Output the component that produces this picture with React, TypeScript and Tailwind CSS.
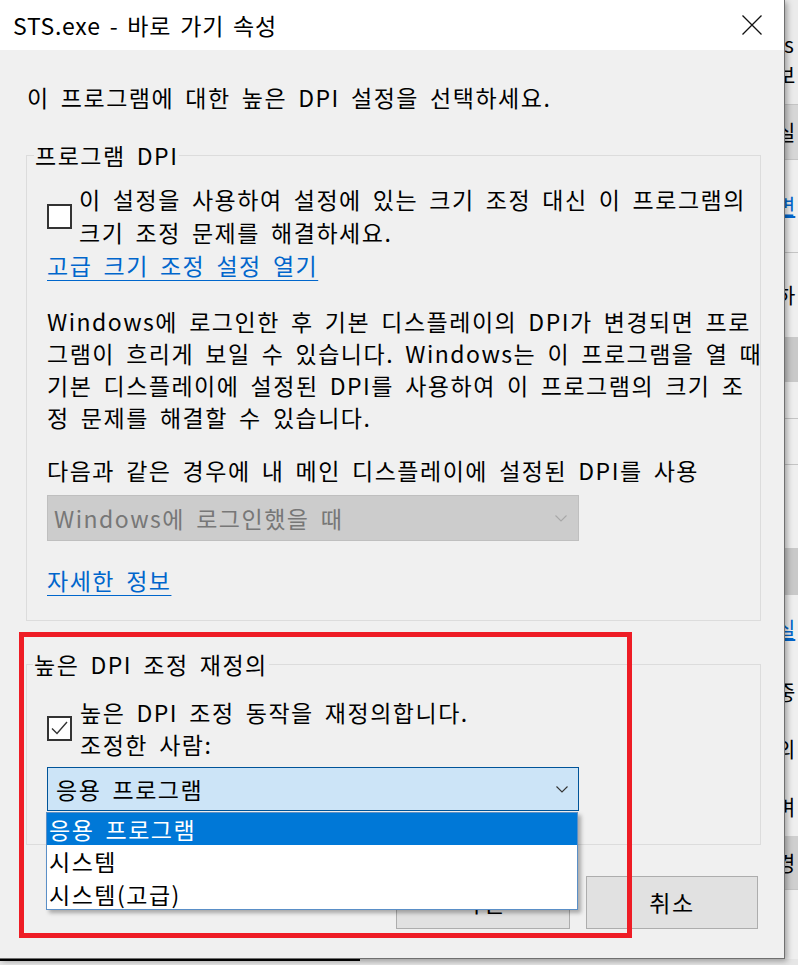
import React from "react";

const font = "font-['Noto_Sans_CJK_KR','Noto_Sans',sans-serif]";

// thin windows-style chevron used in the combo boxes
const Chevron: React.FC<{ color: string }> = ({ color }) => (
  <svg width="12" height="7" viewBox="0 0 12 7" fill="none">
    <path d="M0.5 0.5 L6 6 L11.5 0.5" stroke={color} strokeWidth="1.1" />
  </svg>
);

interface CheckProps {
  checked?: boolean;
}

const CheckBox: React.FC<CheckProps> = ({ checked }) => (
  <div className="w-[25px] h-[25px] shrink-0 border-2 border-[#333333] bg-white flex items-center justify-center">
    {checked && (
      <svg width="17" height="14" viewBox="0 0 17 14" fill="none">
        <path d="M1 7.5 L6 12.5 L16 1" stroke="#333333" strokeWidth="1.4" />
      </svg>
    )}
  </div>
);

// strip of the window lying behind the dialog
const strip = [
  { h: 30, bg: "bg-[#ebebeb]", text: "" },
  { h: 30, bg: "bg-[#ebebeb]", text: "rs" },
  { h: 30, bg: "bg-[#ebebeb]", text: "보" },
  { h: 15, bg: "bg-[#ebebeb]", text: "", border: true },
  { h: 55, bg: "bg-[#d6d6d6]", text: "실", border: true },
  { h: 93, bg: "bg-[#efefef]", text: "변", blue: true, border: true },
  { h: 84, bg: "bg-[#efefef]", text: "하" },
  { h: 45, bg: "bg-[#c9c9c9]", text: "" },
  { h: 37, bg: "bg-[#efefef]", text: "", border: true },
  { h: 46, bg: "bg-[#efefef]", text: "", border: true },
  { h: 83, bg: "bg-[#efefef]", text: "" },
  { h: 47, bg: "bg-[#c9c9c9]", text: "" },
  { h: 68, bg: "bg-[#efefef]", text: "실", blue: true },
  { h: 57, bg: "bg-[#efefef]", text: "중" },
  { h: 58, bg: "bg-[#efefef]", text: "의" },
  { h: 58, bg: "bg-[#efefef]", text: "며" },
  { h: 54, bg: "bg-[#cfcfcf]", text: "경", border: true },
  { h: 81, bg: "bg-[#efefef]", text: "" },
];

const App: React.FC = () => {
  return (
    <div className={`w-[798px] h-[965px] bg-[#e6e6e6] overflow-hidden relative ${font}`}>
      <div className="flex h-[959px]">
        {/* dialog */}
        <div className="relative w-[785px] h-[959px] shrink-0 flex flex-col border-r border-b border-[#707070] bg-[#f0f0f0] shadow-[2px_2px_6px_rgba(0,0,0,0.35)] z-10 text-black">
          {/* title bar */}
          <div className="h-[50px] bg-white flex items-center justify-between pl-[13px] pr-[22px] shrink-0">
            <span className="text-[23px] leading-[30px] tracking-[0.8px] [word-spacing:3px]">STS.exe - 바로 가기 속성</span>
            <svg width="20" height="20" viewBox="0 0 20 20" fill="none">
              <path d="M0.5 0.5 L19.5 19.5 M19.5 0.5 L0.5 19.5" stroke="#111" strokeWidth="1.3" />
            </svg>
          </div>

          <div className="flex-1 flex flex-col pl-[26px] text-[23px] tracking-[1.5px] [word-spacing:4.5px]">
            <div className="mt-[31px] leading-[32px] pl-[1px] whitespace-nowrap">이 프로그램에 대한 높은 DPI 설정을 선택하세요.</div>

            {/* program dpi group */}
            <fieldset className="mt-[26px] w-[735px] min-w-0 border border-[#dcdcdc] pb-[24px]">
              <legend className="ml-[7px] px-[1px] leading-[32px]">프로그램 DPI</legend>
              <div className="pl-[20px] flex flex-col">
                <div className="mt-[12px] flex items-center gap-[7px]">
                  <CheckBox />
                  <div className="leading-[33px] whitespace-nowrap">
                    이 설정을 사용하여 설정에 있는 크기 조정 대신 이 프로그램의
                    <br />
                    크기 조정 문제를 해결하세요.
                  </div>
                </div>
                <span className="leading-[32px] text-[#0066cc] underline underline-offset-[5px] decoration-[1px] self-start">고급 크기 조정 설정 열기</span>
                <div className="mt-[24px] leading-[32px] whitespace-nowrap">
                  Windows에 로그인한 후 기본 디스플레이의 DPI가 변경되면 프로
                  <br />
                  그램이 흐리게 보일 수 있습니다. Windows는 이 프로그램을 열 때
                  <br />
                  기본 디스플레이에 설정된 DPI를 사용하여 이 프로그램의 크기 조
                  <br />
                  정 문제를 해결할 수 있습니다.
                </div>
                <div className="mt-[21px] leading-[32px] whitespace-nowrap">다음과 같은 경우에 내 메인 디스플레이에 설정된 DPI를 사용</div>
                <div className="mt-[9px] w-[532px] h-[46px] bg-[#cccccc] border border-[#bfbfbf] flex items-center justify-between pl-[6px] pr-[11px] text-[#777777]">
                  <span>Windows에 로그인했을 때</span>
                  <Chevron color="#a8a8a8" />
                </div>
                <span className="mt-[23px] leading-[32px] text-[#0066cc] underline underline-offset-[5px] decoration-[1px] self-start">자세한 정보</span>
              </div>
            </fieldset>

            {/* high dpi override group */}
            <fieldset className="mt-[27px] w-[735px] min-w-0 border border-[#dcdcdc] pb-[33px]">
              <legend className="ml-[6px] px-[1px] leading-[32px]">높은 DPI 조정 재정의</legend>
              <div className="pl-[20px] flex flex-col">
                <div className="mt-[16px] flex items-center gap-[8px]">
                  <CheckBox checked />
                  <div className="leading-[32px] whitespace-nowrap">
                    높은 DPI 조정 동작을 재정의합니다.
                    <br />
                    조정한 사람:
                  </div>
                </div>
                <div className="mt-[7px] w-[532px] h-[44px] bg-[#cce4f7] border border-[#005499] flex items-center justify-between pl-[8px] pr-[10px]">
                  <span>응용 프로그램</span>
                  <Chevron color="#333333" />
                </div>
              </div>
            </fieldset>

            {/* buttons */}
            <div className="mt-[31px] w-[732px] flex justify-end gap-[16px]">
              <div className="w-[174px] h-[53px] bg-[#e1e1e1] border border-[#adadad] flex items-center justify-center">확인</div>
              <div className="w-[172px] h-[53px] bg-[#e1e1e1] border border-[#adadad] flex items-center justify-center">취소</div>
            </div>
          </div>

          {/* open dropdown list */}
          <div className="absolute left-[46px] top-[812px] w-[532px] h-[98px] bg-white border border-[#5a8fc7] shadow-[3px_3px_4px_rgba(0,0,0,0.3)] text-[23px] tracking-[1.5px] [word-spacing:4.5px] flex flex-col">
            <div className="h-[32px] bg-[#0078d7] text-white flex items-center pl-[2px]">응용 프로그램</div>
            <div className="h-[33px] flex items-center pl-[2px]">시스템</div>
            <div className="h-[32px] flex items-center pl-[2px]">시스템(고급)</div>
          </div>

          {/* red highlight annotation */}
          <div className="absolute left-[19px] top-[632px] w-[613px] h-[306px] border-[5px] border-[#ee1c25] pointer-events-none" />
        </div>

        {/* background window */}
        <div className="flex-1 flex flex-col overflow-hidden text-[21px]">
          {strip.map((s, i) => (
            <div
              key={i}
              style={{ height: s.h }}
              className={`${s.bg} ${s.border ? "border-b border-[#c4c4c4]" : ""} flex items-center overflow-hidden shrink-0`}
            >
              {s.text && (
                <span className={`-ml-[9px] whitespace-nowrap ${s.blue ? "text-[#0066cc] underline" : "text-black"}`}>{s.text}</span>
              )}
            </div>
          ))}
        </div>
      </div>
      {/* taskbar edge below */}
      <div className="h-[2px] w-[360px] bg-black" />
    </div>
  );
};

export default App;
